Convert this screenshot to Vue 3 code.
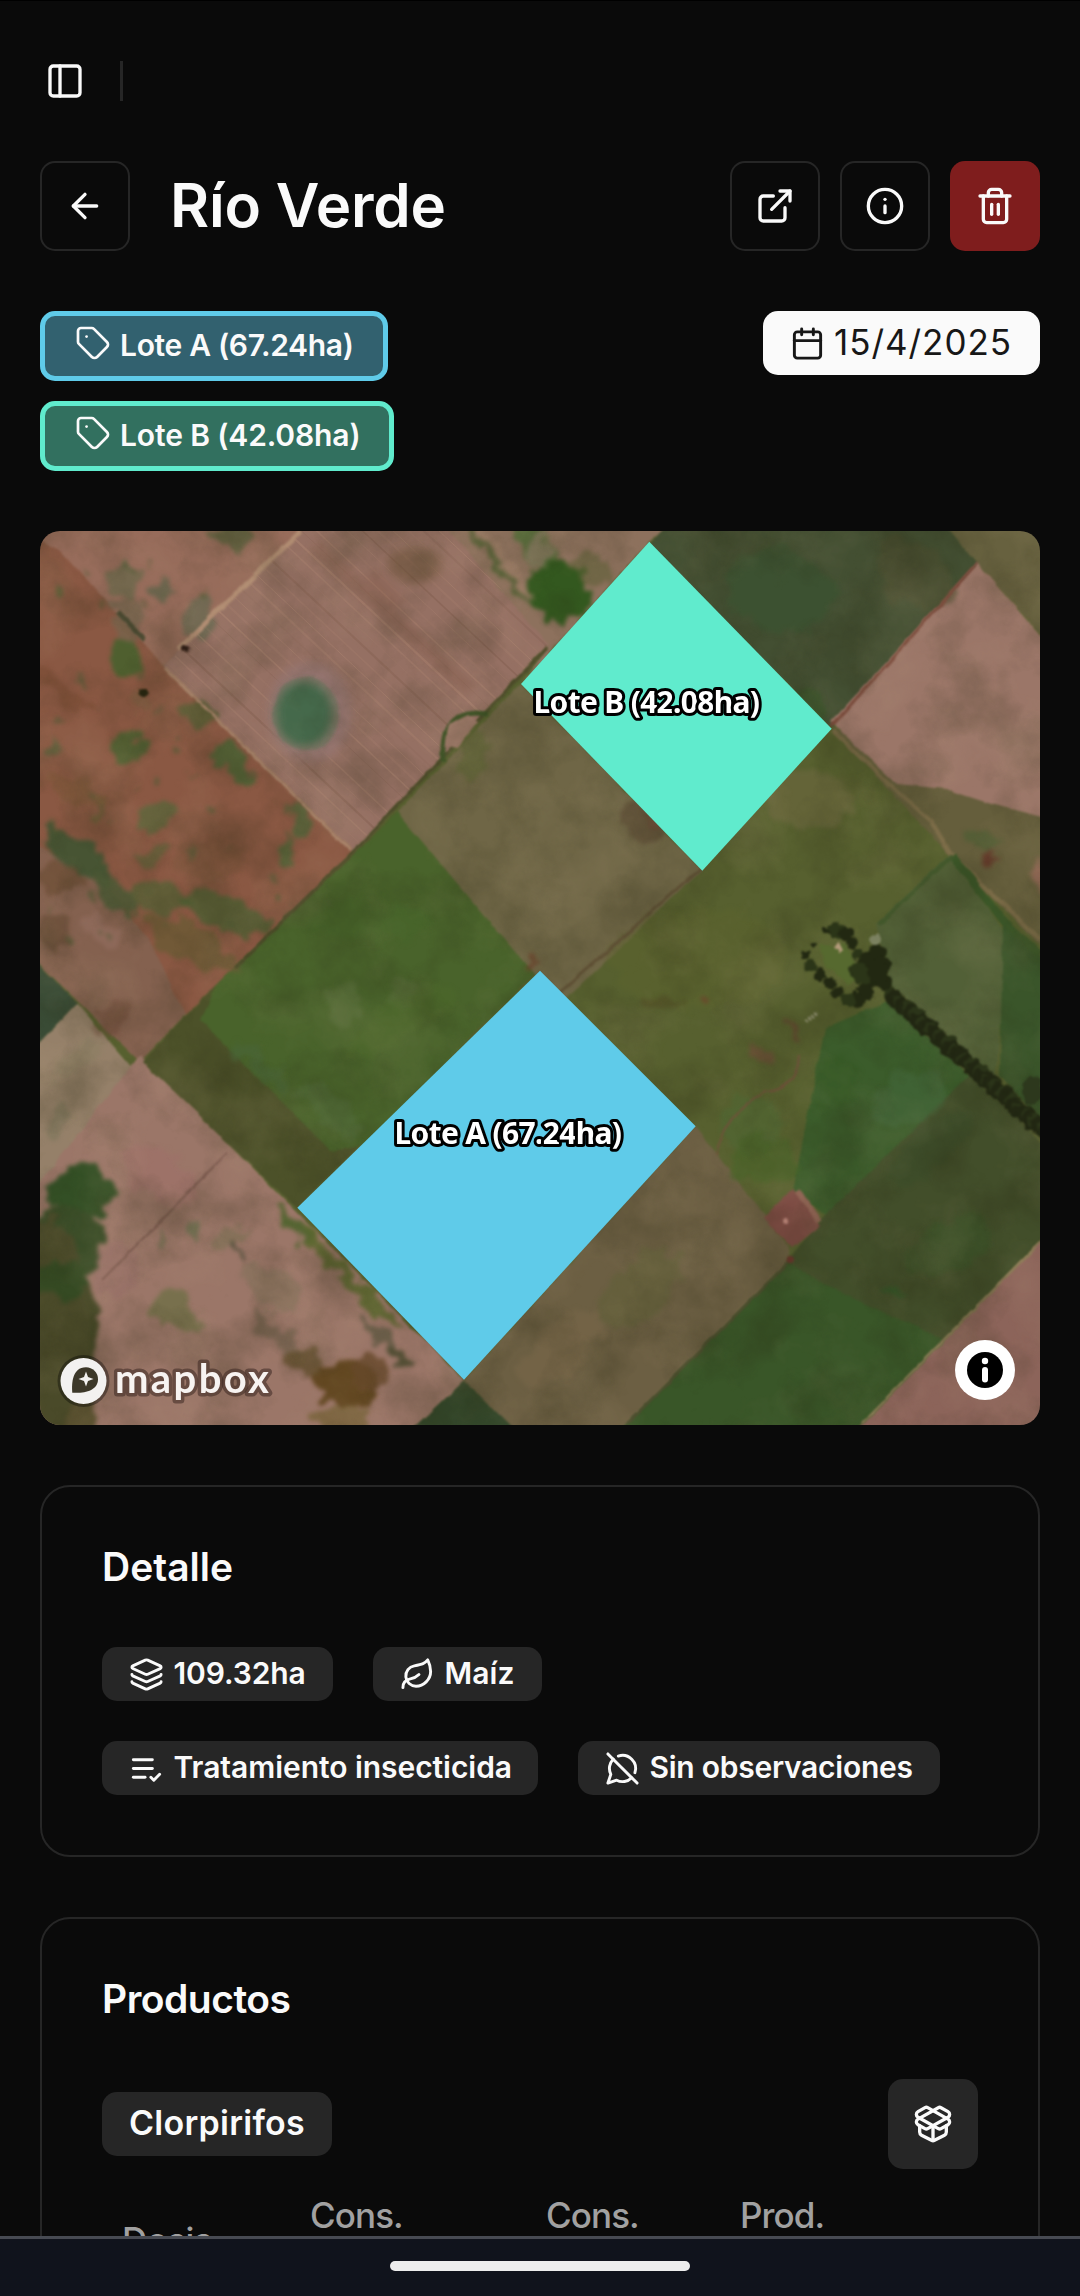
<script setup>
const icons = {
  panel: ['M5 3h14a2 2 0 0 1 2 2v14a2 2 0 0 1-2 2H5a2 2 0 0 1-2-2V5a2 2 0 0 1 2-2z', 'M9 3v18'],
  back: ['m12 19-7-7 7-7', 'M19 12H5'],
  external: ['M15 3h6v6', 'M10 14 21 3', 'M18 13v6a2 2 0 0 1-2 2H5a2 2 0 0 1-2-2V8a2 2 0 0 1 2-2h6'],
  info: ['M22 12a10 10 0 1 1-20 0 10 10 0 0 1 20 0z', 'M12 16v-4', 'M12 8h.01'],
  trash: ['M3 6h18', 'M19 6v14a2 2 0 0 1-2 2H7a2 2 0 0 1-2-2V6', 'M8 6V4a2 2 0 0 1 2-2h4a2 2 0 0 1 2 2v2', 'M10 11v6', 'M14 11v6'],
  calendar: ['M8 2v4', 'M16 2v4', 'M5 4h14a2 2 0 0 1 2 2v14a2 2 0 0 1-2 2H5a2 2 0 0 1-2-2V6a2 2 0 0 1 2-2z', 'M3 10h18'],
  tag: ['M12.586 2.586A2 2 0 0 0 11.172 2H4a2 2 0 0 0-2 2v7.172a2 2 0 0 0 .586 1.414l8.704 8.704a2.426 2.426 0 0 0 3.42 0l6.58-6.58a2.426 2.426 0 0 0 0-3.42z', 'M7.7 7.7h.01'],
  layers: ['m12.83 2.18a2 2 0 0 0-1.66 0L2.6 6.08a1 1 0 0 0 0 1.83l8.58 3.91a2 2 0 0 0 1.66 0l8.58-3.9a1 1 0 0 0 0-1.83z', 'M2 12a1 1 0 0 0 .58.91l8.6 3.91a2 2 0 0 0 1.65 0l8.58-3.9A1 1 0 0 0 22 12', 'M2 17a1 1 0 0 0 .58.91l8.6 3.91a2 2 0 0 0 1.65 0l8.58-3.9A1 1 0 0 0 22 17'],
  leaf: ['M11 20A7 7 0 0 1 9.8 6.1C15.5 5 17 4.48 19 2c1 2 2 4.18 2 8 0 5.5-4.78 10-10 10Z', 'M2 21c0-3 1.85-5.36 5.08-6C9.5 14.52 12 13 13 12'],
  list: ['M11 18H3', 'm15 18 2 2 4-4', 'M16 12H3', 'M16 6H3'],
  silent: ['M20.5 14.9A9 9 0 0 0 9.1 3.5', 'm2 2 20 20', 'M5.6 5.6C3 8.3 2.2 12.5 4 16l-2 6 6-2c3.4 1.8 7.6 1.1 10.3-1.7'],
  box: ['M12 22v-9', 'M15.17 2.21a1.67 1.67 0 0 1 1.63 0L21 4.57a1.93 1.93 0 0 1 0 3.36L8.82 14.79a1.655 1.655 0 0 1-1.64 0L3 12.43a1.93 1.93 0 0 1 0-3.36z', 'M20 13v3.87a2.06 2.06 0 0 1-1.11 1.83l-6 3.08a1.93 1.93 0 0 1-1.78 0l-6-3.08A2.06 2.06 0 0 1 4 16.87V13', 'M21 12.43a1.93 1.93 0 0 0 0-3.36L8.83 2.2a1.64 1.64 0 0 0-1.63 0L3 4.57a1.93 1.93 0 0 0 0 3.36l12.18 6.86a1.636 1.636 0 0 0 1.63 0z']
}
const lots = [
  { cls: 'lot-a', text: 'Lote A (67.24ha)' },
  { cls: 'lot-b', text: 'Lote B (42.08ha)' }
]
const details = [
  { icon: 'layers', cls: 'chip-area', text: '109.32ha' },
  { icon: 'leaf', cls: 'chip-crop', text: 'Maíz' },
  { icon: 'list', cls: 'chip-job', text: 'Tratamiento insecticida' },
  { icon: 'silent', cls: 'chip-notes', text: 'Sin observaciones' }
]
// Land parcels, back to front: outline and fill
const parcels = [
  ['0,500 1080,500 1080,1460 0,1460', '#57602f'],
  ['0,500 331,500 163,666 353,852 185,1015 20,835', '#8a5843'],
  ['0,500 331,500 163,666 150,650 60,550 20,530', '#976c5b'],
  ['20,835 100,880 150,940 185,1015 140,1062 20,945', '#84614f'],
  ['20,945 77,1003 20,1063', '#394b35'],
  ['77,1003 134,1070 20,1227 20,1063', '#958069'],
  ['140,1055 297,1212 464,1380 390,1450 20,1450 20,1207', '#9b7668'],
  ['183,1018 216,985 397,812 540,965 297,1208 143,1062', '#4c5129'],
  ['216,985 397,812 540,968 365,1145 330,1150 200,1020', '#49632b'],
  ['464,1380 540,1450 390,1450', '#33472a'],
  ['422,500 700,500 649,542 521,684 547,648', '#8d715d'],
  ['331,500 422,500 549,645 353,852 163,666', '#957063'],
  ['397,812 521,684 702,870 560,1005', '#6f6646'],
  ['690,500 925,500 977,563 831,728 649,545', '#434f32'],
  ['925,500 1080,500 1080,678 977,563', '#67613f'],
  ['831,728 950,855 1060,965 1060,800', '#655e3c'],
  ['831,722 977,563 1060,658 1060,822 985,802 945,789 897,784', '#9b7668'],
  ['952,853 1003,930 1007,960 995,1080 890,985 876,925', '#526037'],
  ['1003,920 1060,975 1060,1145 1000,1075', '#3a552a'],
  ['825,1028 890,1000 970,1075 830,1220 793,1190', '#3b5c2b'],
  ['975,1070 1060,1165 1060,1220 842,1445 780,1270 820,1220', '#424e2a'],
  ['695,1126 725,1165 790,1248 787,1265 605,1450 535,1450 464,1380', '#6c5f43'],
  ['787,1263 835,1290 945,1340 840,1445 605,1445', '#395628'],
  ['1060,1221 1060,1450 838,1450', '#8c645a']
]
// Vegetation patches: cx, cy, rx, ry, angle, fill, opacity
const patches = [
  [235, 538, 22, 12, 10, '#59603c', .8], [125, 580, 18, 17, 0, '#6c684b', .8], [165, 592, 10, 12, 0, '#60634a', .8],
  [199, 618, 13, 25, 20, '#686850', .8], [128, 620, 15, 22, 0, '#70684e', .6], [126, 655, 18, 18, 0, '#48602d', .9],
  [56, 590, 6, 7, 0, '#4b6030', .7], [197, 715, 16, 14, 0, '#4f5a30', .8], [126, 748, 17, 17, 0, '#4d6031', .9],
  [52, 745, 5, 12, 0, '#506037', .7], [236, 765, 15, 24, -40, '#4e6335', .9], [155, 818, 23, 10, -35, '#596439', .8],
  [302, 820, 10, 18, 0, '#50653a', .8], [286, 853, 7, 13, 0, '#4f6638', .8], [150, 855, 18, 8, -20, '#5c6239', .7],
  [98, 805, 5, 16, 0, '#656036', .7], [75, 855, 42, 15, 36, '#3f5432', .9], [115, 895, 30, 13, 40, '#4e5a36', .9],
  [162, 898, 30, 14, 8, '#555f35', .8], [225, 912, 46, 18, 20, '#4e6033', .8], [190, 945, 56, 18, 28, '#6a5a35', .8],
  [278, 895, 5, 5, 0, '#485c2f', .8], [75, 790, 35, 14, 20, '#7d5738', .6], [140, 700, 12, 9, 0, '#7d5f42', .6],
  [60, 690, 40, 8, 35, '#74482f', .5], [210, 860, 36, 20, 0, '#7a5139', .5],
  [558, 590, 28, 32, -20, '#33581f', 1], [535, 547, 28, 15, 40, '#4e6b35', .8], [590, 570, 22, 14, 40, '#5d5f37', .6],
  [540, 551, 12, 14, 0, '#877860', .8], [500, 568, 50, 4, 50, '#4c5e2f', .8], [505, 560, 50, 5, 50, '#a08069', .6],
  [475, 757, 14, 22, 0, '#5c6334', .7], [645, 820, 24, 26, 40, '#5c4e35', .9], [655, 812, 16, 7, 40, '#6d4736', .7],
  [780, 590, 55, 40, 20, '#365330', .5], [915, 575, 45, 30, 40, '#4c4f31', .6], [812, 708, 20, 14, 40, '#345423', .5],
  [810, 800, 45, 30, 0, '#6d6740', .6], [700, 960, 90, 50, 0, '#5c652e', .4], [860, 790, 25, 9, 35, '#5a6030', .7],
  [993, 858, 7, 5, 10, '#65392a', .9], [985, 843, 18, 8, 10, '#495e32', .6], [1038, 875, 6, 18, 0, '#966657', .8],
  [660, 1003, 18, 10, 0, '#514d24', .6], [760, 1055, 11, 7, 0, '#75503c', .7], [791, 1032, 11, 4, 45, '#6c3c33', .8],
  [707, 997, 4, 4, 0, '#713e2a', .8], [534, 968, 9, 5, -40, '#6b3d28', .8],
  [750, 1125, 30, 30, 0, '#4f6833', .6], [760, 1160, 34, 26, 0, '#486228', .7], [835, 1080, 20, 28, 0, '#345623', .6],
  [910, 1100, 40, 26, -30, '#43653a', .6], [930, 1150, 50, 22, -40, '#374c27', .4], [895, 1290, 14, 6, 0, '#315527', .9],
  [950, 1245, 44, 24, -30, '#355226', .5], [640, 1290, 50, 28, -40, '#5e6036', .5], [560, 1350, 50, 25, -40, '#7a684a', .5],
  [345, 1006, 18, 20, 0, '#5b703e', .6], [400, 990, 14, 18, 0, '#5b703e', .5], [370, 920, 60, 20, 0, '#45652a', .5],
  [400, 1020, 60, 18, -30, '#4d6a2a', .4], [260, 1065, 36, 10, 40, '#486436', .7], [330, 1110, 40, 14, 40, '#516a3a', .6],
  [82, 1195, 34, 28, 0, '#334f25', 1], [65, 1245, 38, 38, 0, '#384b26', 1], [64, 1320, 34, 56, 0, '#444726', 1],
  [62, 1400, 36, 44, 0, '#59502f', 1], [50, 1330, 36, 110, 0, '#4a4a29', 1], [60, 1280, 28, 18, 0, '#2f4a22', .8],
  [58, 1120, 10, 20, 20, '#7b755a', .6], [75, 1060, 26, 12, -40, '#8a7d62', .5], [115, 1020, 14, 20, 30, '#714c3c', .6],
  [60, 880, 22, 16, 0, '#65482f', .6], [55, 930, 16, 20, 0, '#5e452f', .6], [100, 930, 24, 12, 40, '#916c5e', .7],
  [175, 1308, 26, 18, 30, '#74704a', .9], [193, 1230, 7, 12, 0, '#6b7050', .8], [230, 1235, 14, 12, 0, '#7f7055', .7],
  [270, 1290, 34, 20, 40, '#817058', .6], [165, 1240, 4, 10, 0, '#6f6c50', .8], [242, 1253, 12, 3, 42, '#4f4f3a', .9],
  [276, 1335, 36, 10, 42, '#74624f', .7], [385, 1340, 34, 5, 45, '#5c5640', .8], [400, 1355, 14, 6, 45, '#4c4a30', .8],
  [345, 1385, 34, 24, 10, '#5f441d', .95], [370, 1373, 18, 18, 0, '#66492a', .8], [305, 1362, 22, 10, 20, '#675130', .8],
  [345, 1418, 30, 10, 0, '#756138', .8], [295, 1225, 26, 6, 50, '#4e632c', .9], [352, 1282, 70, 7, 46, '#5b672f', .9],
  [160, 1175, 40, 24, 30, '#9f7069', .6], [115, 1270, 22, 30, 0, '#956c65', .6]
]
// Scattered shrubs over the bare soil
const shrubs = Array.from({ length: 70 }, (_, i) => {
  const x = 45 + ((i * 97) % 300)
  const y = 540 + ((i * 61) % 400)
  return { x, y, r: 1.5 + (i % 4) }
}).filter(s => s.y - 531 > (s.x - 163) * 0.98 + 145 || s.x + s.y < 800)
// Furrow lines across the ploughed parcel
const furrows = Array.from({ length: 52 }, (_, i) => ({
  x: 165 + i * 7.5, y: 661 - i * 7.3, w: 1 + (i % 3) * 0.6, o: 0.06 + ((i * 7) % 5) * 0.045, c: i % 4 === 2 ? '#6f4c3c' : '#c69b80'
}))
const trees = Array.from({ length: 100 }, (_, i) => ({
  x: 890 + i * 1.6 + ((i * 5) % 4), y: 994 + i * 1.42 + ((i * 7) % 5), r: 6 + (i % 4) * 0.8
}))
const clump = [[836, 931, 8], [846, 933, 7], [852, 943, 6], [826, 930, 4], [858, 953, 5], [868, 962, 10], [878, 952, 8], [882, 965, 9], [858, 970, 9], [872, 976, 12], [866, 992, 8], [857, 1000, 8], [848, 1000, 7], [838, 992, 6], [829, 983, 6], [820, 974, 6], [811, 966, 6], [806, 955, 4], [813, 945, 3], [884, 983, 8], [862, 976, 10], [878, 972, 11]]
</script>

<template>
  <div class="screen">
    <div class="topbar">
      <svg class="ic ic-40" viewBox="0 0 24 24"><path v-for="d in icons.panel" :key="d" :d="d" /></svg>
      <span class="separator"></span>
    </div>

    <main class="content">
      <header class="header">
        <button class="btn outline"><svg class="ic ic-40" viewBox="0 0 24 24"><path v-for="d in icons.back" :key="d" :d="d" /></svg></button>
        <h1>Río Verde</h1>
        <div class="actions">
          <button class="btn outline"><svg class="ic ic-40" viewBox="0 0 24 24"><path v-for="d in icons.external" :key="d" :d="d" /></svg></button>
          <button class="btn outline"><svg class="ic ic-40" viewBox="0 0 24 24"><path v-for="d in icons.info" :key="d" :d="d" /></svg></button>
          <button class="btn danger"><svg class="ic ic-40" viewBox="0 0 24 24"><path v-for="d in icons.trash" :key="d" :d="d" /></svg></button>
        </div>
      </header>

      <section class="meta">
        <div class="lots">
          <div v-for="l in lots" :key="l.text" class="lot" :class="l.cls">
            <svg class="ic ic-tag" viewBox="0 0 24 24"><path v-for="d in icons.tag" :key="d" :d="d" /></svg>
            <span>{{ l.text }}</span>
          </div>
        </div>
        <div class="date">
          <svg class="ic ic-35" viewBox="0 0 24 24"><path v-for="d in icons.calendar" :key="d" :d="d" /></svg>
          <span>15/4/2025</span>
        </div>
      </section>

      <svg class="map" viewBox="40 531 1000 894">
        <defs>
          <filter id="rough" x="-5%" y="-5%" width="110%" height="110%" color-interpolation-filters="sRGB">
            <feTurbulence type="fractalNoise" baseFrequency="0.05" numOctaves="4" seed="4" result="n" />
            <feDisplacementMap in="SourceGraphic" in2="n" scale="28" xChannelSelector="R" yChannelSelector="G" />
            <feGaussianBlur stdDeviation="2" />
          </filter>
          <filter id="edge" x="-5%" y="-5%" width="110%" height="110%" color-interpolation-filters="sRGB">
            <feTurbulence type="fractalNoise" baseFrequency="0.05" numOctaves="2" seed="9" result="n" />
            <feDisplacementMap in="SourceGraphic" in2="n" scale="5" xChannelSelector="R" yChannelSelector="G" />
            <feGaussianBlur stdDeviation="0.9" />
          </filter>
          <filter id="leafy" x="-5%" y="-5%" width="110%" height="110%" color-interpolation-filters="sRGB">
            <feTurbulence type="fractalNoise" baseFrequency="0.12" numOctaves="2" seed="2" result="n" />
            <feDisplacementMap in="SourceGraphic" in2="n" scale="8" xChannelSelector="R" yChannelSelector="G" />
            <feGaussianBlur stdDeviation="0.9" />
          </filter>
          <filter id="grain" x="0" y="0" width="100%" height="100%" color-interpolation-filters="sRGB">
            <feTurbulence type="fractalNoise" baseFrequency="0.016" numOctaves="6" seed="7" />
            <feColorMatrix values="0 0 0 0 0.15  0 0 0 0 0.15  0 0 0 0 0.06  0.6 0 0 0 -0.25" />
          </filter>
          <filter id="glow" x="0" y="0" width="100%" height="100%" color-interpolation-filters="sRGB">
            <feTurbulence type="fractalNoise" baseFrequency="0.014" numOctaves="6" seed="21" />
            <feColorMatrix values="0 0 0 0 0.85  0 0 0 0 0.75  0 0 0 0 0.6  0 0.4 0 0 -0.18" />
          </filter>
          <filter id="soft" x="-30%" y="-30%" width="160%" height="160%"><feGaussianBlur stdDeviation="4" /></filter>
          <clipPath id="plough"><polygon points="300,531 453,531 547,645 353,850 165,666" /></clipPath>
        </defs>
        <g filter="url(#edge)">
          <polygon v-for="p in parcels" :key="p[0]" :points="p[0]" :fill="p[1]" />
        </g>
        <g filter="url(#rough)">
          <ellipse v-for="(p, i) in patches" :key="i" :cx="p[0]" :cy="p[1]" :rx="p[2]" :ry="p[3]" :fill="p[5]" :opacity="p[6]" :transform="`rotate(${p[4]} ${p[0]} ${p[1]})`" />
          <circle v-for="(s, i) in shrubs" :key="'s' + i" :cx="s.x" :cy="s.y" :r="s.r" fill="#4c5a33" opacity=".6" />
        </g>
        <g clip-path="url(#plough)">
          <line v-for="(f, i) in furrows" :key="i" :x1="f.x" :y1="f.y" :x2="f.x + 220" :y2="f.y + 206" :stroke="f.c" :stroke-width="f.w" :opacity="f.o" />
          <path d="M315 545 470 690M370 575 400 605" stroke="#7a513f" stroke-width="14" opacity=".3" filter="url(#soft)" />
          <ellipse cx="415" cy="565" rx="28" ry="18" fill="#6d5238" opacity=".5" filter="url(#soft)" />
          <ellipse cx="310" cy="712" rx="42" ry="50" fill="#947570" opacity=".9" filter="url(#soft)" />
          <ellipse cx="306" cy="714" rx="33" ry="37" fill="#7b7464" filter="url(#edge)" />
          <ellipse cx="304" cy="714" rx="28" ry="32" fill="#45694b" filter="url(#soft)" />
        </g>
        <g filter="url(#edge)" fill="none">
          <path d="M178 650 300 531" stroke="#b08c72" stroke-width="5" />
          <path d="M165 668 350 850" stroke="#a8836a" stroke-width="3" />
          <path d="M547 648 353 852 235 968" stroke="#4a4a28" stroke-width="3" />
          <path d="M831 727 977 563" stroke="#7a4a3b" stroke-width="3" />
          <path d="M833 731 895 790 930 820 950 853 1040 940" stroke="#7c6c48" stroke-width="4" />
          <path d="M952 856 1003 920 1040 955" stroke="#3b5728" stroke-width="8" />
          <path d="M952 856 878 925" stroke="#43582c" stroke-width="4" />
          <path d="M702 868 548 1003" stroke="#5f5035" stroke-width="3" />
          <path d="M799 1055Q797 1090 765 1092 725 1115 716 1155" stroke="#70503a" stroke-width="2" />
          <path d="M1040 1242 862 1423" stroke="#94825c" stroke-width="2" />
          <path d="M228 1152 102 1280" stroke="#7d5b50" stroke-width="2" />
          <path d="M787 1264 627 1424" stroke="#4d4a2e" stroke-width="2" />
          <path d="M443 762V745Q446 715 475 713L488 714" stroke="#3b5124" stroke-width="5" />
          <polygon points="448,725 468,715 478,722 458,747 446,744" fill="#987565" />
          <path d="M118 612 145 640" stroke="#4b4a32" stroke-width="5" />
        </g>
        <g filter="url(#edge)">
          <polygon points="793,1188 820,1226 793,1248 763,1218" fill="#7b4a42" />
          <path d="M797 1190 819 1222" stroke="#8d6152" stroke-width="6" />
          <circle cx="786" cy="1221" r="3" fill="#b98378" />
          <circle cx="790" cy="1260" r="4" fill="#6b352d" />
          <path d="M806 1023 818 1012" stroke="#a7a58a" stroke-width="4" stroke-dasharray="2 2" />
        </g>
        <rect x="40" y="531" width="1000" height="894" filter="url(#grain)" />
        <rect x="40" y="531" width="1000" height="894" filter="url(#glow)" opacity=".6" />
        <g filter="url(#leafy)">
          <polygon points="820,945 845,945 860,965 850,985 825,965" fill="#56692f" />
          <circle v-for="(t, i) in clump" :key="'c' + i" :cx="t[0]" :cy="t[1]" :r="t[2]" :fill="i % 4 ? '#222812' : '#2b3518'" />
          <path d="m836 944 5 7" stroke="#b59b7c" stroke-width="5" />
          <circle cx="876" cy="940" r="5" fill="#7b8160" />
          <circle v-for="(t, i) in trees" :key="i" :cx="t.x" :cy="t.y" :r="t.r" :fill="i % 5 ? '#222713' : '#2b3419'" />
          <ellipse cx="1032" cy="1090" rx="10" ry="14" fill="#2d381d" />
          <ellipse cx="186" cy="648" rx="5" ry="3" fill="#2d1d14" />
          <ellipse cx="144" cy="692" rx="5" ry="4" fill="#26240f" />
        </g>
        <polygon points="649.3,541.7 831.7,728.7 702.3,870.7 521,684" fill="#60ebcd" />
        <polygon points="540,970.7 695.7,1126.3 464,1379.7 297.3,1207.7" fill="#5fcbe9" />
        <text class="map-label" x="533.500" y="712.5" textLength="226.500">Lote B (42.08ha)</text>
        <text class="map-label" x="394.500" y="1143.5" textLength="227.500">Lote A (67.24ha)</text>
        <g>
          <circle cx="83.5" cy="1381" r="26" fill="#000" opacity=".35" />
          <circle cx="83.5" cy="1381" r="23" fill="#f3f2f0" />
          <path d="M72.300 1392.700C71.500 1384 72 1367.300 86 1367.300A12 12 0 0 1 98 1379.300C98 1391 84 1393.500 72.300 1392.700Z" fill="#3c3828" />
          <path d="m86 1371.500 2 5.500 5.500 2-5.500 2-2 5.500-2-5.500-5.500-2 5.500-2z" fill="#f3f2f0" />
          <text class="brand" x="115" y="1392.500" textLength="154">mapbox</text>
        </g>
        <circle cx="985" cy="1370" r="30" fill="#fff" />
        <circle cx="985" cy="1370" r="18" fill="#000" />
        <circle cx="985" cy="1361" r="3.200" fill="#fff" />
        <rect x="982" y="1367" width="6" height="15.500" rx="3" fill="#fff" />
      </svg>

      <section class="card">
        <h2>Detalle</h2>
        <div class="chips">
          <div v-for="c in details" :key="c.text" class="chip" :class="c.cls">
            <svg class="ic ic-35" viewBox="0 0 24 24"><path v-for="d in icons[c.icon]" :key="d" :d="d" /></svg>
            <span>{{ c.text }}</span>
          </div>
        </div>
      </section>

      <section class="card">
        <h2 class="wide">Productos</h2>
        <div class="product-head">
          <div class="product">Clorpirifos</div>
          <button class="btn muted"><svg class="ic ic-40" viewBox="0 0 24 24"><path v-for="d in icons.box" :key="d" :d="d" /></svg></button>
        </div>
        <div class="columns">
          <span class="low">Dosis</span>
          <span>Cons.</span>
          <span>Cons.</span>
          <span>Prod.</span>
        </div>
      </section>
    </main>

    <footer class="navbar"><span class="handle"></span></footer>
  </div>
</template>

<style>
body { background: #0a0a0a; }
</style>

<style scoped>
* { box-sizing: border-box; }
.screen {
  width: 1080px; height: 2296px; overflow: hidden;
  display: flex; flex-direction: column;
  background: #0a0a0a; border-top: 1px solid #000;
  color: #fafafa; font-family: Inter, "Liberation Sans", sans-serif;
}
.ic { fill: none; stroke: currentColor; stroke-width: 2; stroke-linecap: round; stroke-linejoin: round; flex: none; display: block; }
.ic-40 { width: 40px; height: 40px; }
.ic-35 { width: 35px; height: 35px; }
.ic-tag { width: 36px; height: 36px; stroke-width: 1.8; margin-bottom: 4px; }
.topbar { height: 160px; flex: none; display: flex; align-items: center; padding-left: 45px; }
.separator { width: 3px; height: 40px; margin-left: 35px; background: #262626; }
.content { flex: 1; min-height: 0; overflow: hidden; padding: 0 40px; display: flex; flex-direction: column; gap: 60px; }
.content > * { flex: none; }
.header { display: flex; align-items: center; height: 90px; }
h1, h2 { margin: 0; font-weight: 600; white-space: nowrap; }
h1 { margin-left: 40px; font-size: 60px; line-height: 88px; padding-bottom: 2px; letter-spacing: -.2px; }
.actions { margin-left: auto; display: flex; gap: 20px; }
.btn { width: 90px; height: 90px; padding: 0; border: 0; border-radius: 15px; display: flex; align-items: center; justify-content: center; background: none; color: #fafafa; }
.outline { border: 2px solid #262626; }
.danger { background: #7f1d1d; }
.muted { background: #262626; }
.meta { display: flex; justify-content: space-between; align-items: flex-start; height: 160px; }
.lots { display: flex; flex-direction: column; gap: 20px; }
.lot { height: 70px; padding: 0 0 2px 29.5px; border: 5px solid; border-radius: 15px; display: flex; align-items: center; gap: 9.5px; font-size: 30px; font-weight: 600; white-space: nowrap; }
.lot span, .lot .ic { color: #fafafa; }
.lot-a { width: 348px; border-color: #5fcbe9; background: #32616f; letter-spacing: -.32px; }
.lot-b { width: 354px; border-color: #60ebcd; background: #32705f; letter-spacing: -.13px; }
.date { width: 277px; height: 64px; padding-left: 27px; border-radius: 15px; background: #fafafa; color: #171717; display: flex; align-items: center; gap: 9px; font-size: 35px; letter-spacing: .95px; white-space: nowrap; }
.date span { margin-bottom: 3px; }
.map { width: 1000px; height: 894px; border-radius: 20px; display: block; overflow: hidden; }
.map-label { font: 700 30px "Noto Sans", sans-serif; fill: #fff; stroke: #000; stroke-width: 6px; stroke-linejoin: round; paint-order: stroke; }
.brand { font: 700 40px Lato, sans-serif; fill: #f7f3f1; stroke: rgba(60, 40, 35, .55); stroke-width: 7px; stroke-linejoin: round; paint-order: stroke; }
.card { border: 2px solid #262626; border-radius: 30px; padding: 60px; }
h2 { font-size: 39px; line-height: 40px; margin-bottom: 60px; letter-spacing: 0; }
h2.wide { letter-spacing: -.5px; }
.chips { display: flex; flex-wrap: wrap; gap: 40px; }
.chip { height: 54px; padding-left: 27px; border-radius: 15px; background: #262626; display: flex; align-items: center; gap: 9.5px; font-size: 30px; font-weight: 600; white-space: nowrap; }
.chip span { margin-bottom: 2px; }
.chip-area { width: 231px; letter-spacing: -.1px; }
.chip-crop { width: 169px; letter-spacing: .1px; }
.chip-job { width: 436px; letter-spacing: -.05px; }
.chip-notes { width: 362px; letter-spacing: -.26px; }
.product-head { display: flex; justify-content: space-between; align-items: center; height: 90px; }
.product { width: 230px; height: 64px; padding-bottom: 3px; border-radius: 15px; background: #262626; display: flex; align-items: center; justify-content: center; font-size: 34px; font-weight: 600; letter-spacing: .25px; }
.columns { margin-top: 21px; display: grid; grid-template-columns: 188px 236px 194px 1fr; padding-left: 20px; color: #a1a1a1; font-size: 35px; line-height: 50px; font-weight: 500; letter-spacing: -.9px; }
.low { padding-top: 25px; letter-spacing: -.6px; }
.navbar { flex: none; height: 60px; border-top: 3px solid #474a52; background: #10131c; display: flex; justify-content: center; padding-top: 22px; }
.handle { width: 300px; height: 10px; border-radius: 5px; background: #ededed; }
</style>
